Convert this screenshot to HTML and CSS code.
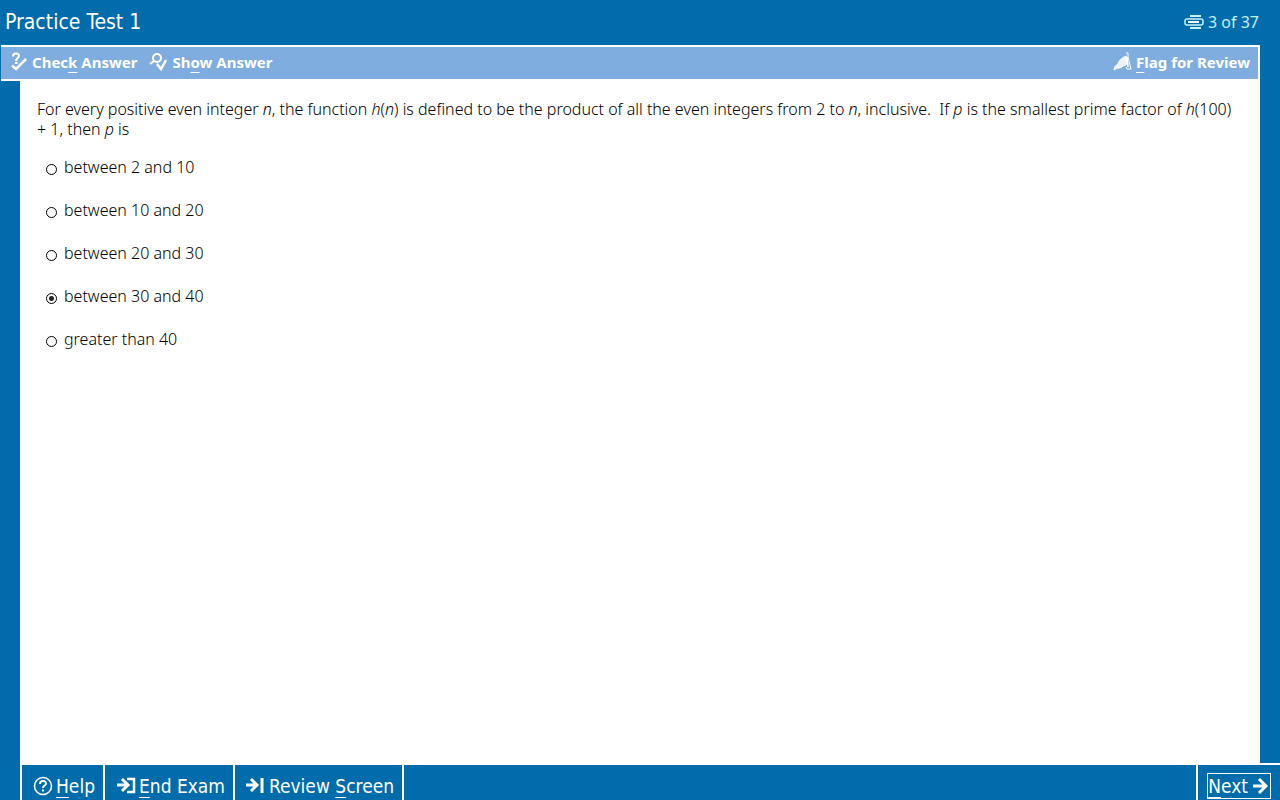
FILE: index.html
```html
<!DOCTYPE html>
<html lang="en">
<head>
    <meta charset="utf-8">
    <title>Practice Test 1</title>
    <link rel="stylesheet" href="styles.css">
</head>
<body>
    <div class="exam">
        <header class="exam-header">
            <h1 class="exam-title">Practice Test 1</h1>
            <div class="exam-progress">
                <svg width="20" height="16" viewBox="0 0 20 16" fill="none" stroke="#c4f0fa">
                    <path d="M6 2h11M6 14h11" stroke-width="2"/>
                    <rect x="1" y="5" width="18" height="6" rx="2" stroke-width="1.500"/>
                    <path d="M4 8h11" stroke="#fff" stroke-width="2"/>
                </svg>
                <span>3 of 37</span>
            </div>
        </header>

        <div class="toolbar">
            <button type="button" class="tool-button">
                <svg width="16" height="20" viewBox="0 0 16 20" fill="none" stroke="#fff" stroke-width="2">
                    <path d="M2 4.500C2 .5 8 .5 8 4c0 2-3 2-3 5"/>
                    <path d="M4 11h2.500"/>
                    <path d="M1 13.500l4 3.500L15 7" stroke-width="2.500"/>
                </svg>
                <span>Chec<u>k</u> Answer</span>
            </button>
            <button type="button" class="tool-button">
                <svg width="18" height="20" viewBox="0 0 18 20" fill="none" stroke="#fff" stroke-width="2">
                    <circle cx="8" cy="6" r="4"/>
                    <path d="M5 9l-4 3"/>
                    <path d="M8 12l4 5 5-9" stroke-width="2.500"/>
                </svg>
                <span>Sh<u>o</u>w Answer</span>
            </button>
            <button type="button" class="tool-button tool-flag">
                <svg width="20" height="20" viewBox="0 0 20 20" fill="none" stroke="#fff">
                    <path d="M1 18c0-3 2-5 4-6 1-4 4-6 8-8l1 5-1 4c-3 0-4 3-7 3-2 0-3 1-5 2z" fill="#fff" fill-opacity=".85"/>
                    <path d="M13 1h2v4l3 12h-4l-1-2"/>
                    <path d="M14 5l1 10" stroke-width="1.500"/>
                </svg>
                <span><u>F</u>lag for Review</span>
            </button>
        </div>

        <main class="question">
            <p class="question-text">For every positive even integer <i>n</i>, the function <i>h</i>(<i>n</i>) is defined to be the product of all the even integers from 2 to <i>n</i>, inclusive.&nbsp; If <i>p</i> is the smallest prime factor of <i>h</i>(100) + 1, then <i>p</i> is</p>
            <div class="choices">
                <label class="choice"><input type="radio" name="answer"> between 2 and 10</label>
                <label class="choice"><input type="radio" name="answer"> between 10 and 20</label>
                <label class="choice"><input type="radio" name="answer"> between 20 and 30</label>
                <label class="choice"><input type="radio" name="answer" checked> between 30 and 40</label>
                <label class="choice"><input type="radio" name="answer"> greater than 40</label>
            </div>
        </main>

        <footer class="exam-footer">
            <button type="button" class="nav-button">
                <svg width="20" height="20" viewBox="0 0 20 20" fill="none" stroke="#fff">
                    <circle cx="10" cy="10" r="8.500" stroke-width="1.500"/>
                    <path d="M7 8c0-4 6-4 6-.5 0 2-3 2-3 4.500" stroke-width="2"/>
                    <path d="M10 13.500v2" stroke-width="2"/>
                </svg>
                <span><u>H</u>elp</span>
            </button>
            <button type="button" class="nav-button">
                <svg width="20" height="20" viewBox="0 0 20 20" fill="none" stroke="#fff">
                    <path d="M1 9h10M6 3l6 6-6 6" stroke-width="3"/>
                    <path d="M11 3h7v13h-7" stroke-width="2.500"/>
                </svg>
                <span><u>E</u>nd Exam</span>
            </button>
            <button type="button" class="nav-button">
                <svg width="20" height="20" viewBox="0 0 20 20" fill="none" stroke="#fff" stroke-width="3">
                    <path d="M0 9h10M5 3l6 6-6 6"/>
                    <path d="M16 2v15"/>
                </svg>
                <span>Review <u>S</u>creen</span>
            </button>
            <div class="nav-next">
                <button type="button" class="next-button">
                    <span><u>N</u>ext</span>
                    <svg width="16" height="18" viewBox="0 0 16 18" fill="none" stroke="#fff" stroke-width="3">
                        <path d="M1 9h12M7 2l7 7-7 7"/>
                    </svg>
                </button>
            </div>
        </footer>
    </div>
</body>
</html>
```
FILE: styles.css
```css
* {
    box-sizing: border-box;
}

body {
    margin: 0;
    background: #006cab;
    font-family: "Noto Sans", sans-serif;
}

button {
    margin: 0;
    border: 0;
    background: none;
    color: #fff;
    font-family: inherit;
    cursor: pointer;
}

u {
    text-decoration: underline;
    text-decoration-thickness: 1px;
    text-underline-offset: 4px;
}

.exam {
    display: flex;
    flex-direction: column;
    min-height: 100vh;
}

.exam-header {
    display: flex;
    align-items: center;
    justify-content: space-between;
    height: 45px;
    padding: 0 21px 2px 5px;
    color: #fff;
}

.exam-title {
    margin: 0;
    font-family: "DejaVu Sans Condensed", sans-serif;
    font-size: 21px;
    font-weight: normal;
}

.exam-progress {
    display: flex;
    align-items: center;
    gap: 4px;
    font-size: 16px;
    color: #c4f0fa;
}

/* toolbar */
.toolbar {
    display: flex;
    align-items: center;
    gap: 12px;
    height: 36px;
    margin: 0 20px 0 1px;
    padding: 0 8px 2px 10px;
    background: #80addf;
    border: solid #fff;
    border-width: 2px 2px 2px 0;
}

.tool-button {
    display: flex;
    align-items: center;
    gap: 5px;
    padding: 0;
    font-size: 15px;
    font-weight: bold;
}

.tool-flag {
    margin-left: auto;
    gap: 3px;
}

/* question area */
.question {
    flex: 1;
    margin: 0 20px;
    padding: 18px 17px;
    background: #fff;
    color: #000;
    font-size: 16px;
    font-weight: 300;
    line-height: 20px;
}

.question-text {
    margin: 0 0 18px;
}

.choices {
    display: flex;
    flex-direction: column;
    align-items: flex-start;
    gap: 23px;
    padding-left: 9px;
}

.choice {
    display: flex;
    align-items: center;
    gap: 7px;
}

.choice input {
    appearance: none;
    width: 11px;
    height: 11px;
    margin: 4px 0 0;
    border: 1px solid #000;
    border-radius: 50%;
    background: #fff;
}

.choice input:checked {
    background: radial-gradient(circle, #222 0 2px, #fff 3px);
}

/* bottom navigation */
.exam-footer {
    display: flex;
    height: 35px;
    margin-left: 20px;
    border-left: 2px solid #fff;
    font-family: "DejaVu Sans Condensed", sans-serif;
}

.nav-button {
    display: flex;
    align-items: center;
    gap: 3px;
    padding: 7px 8px 0 11px;
    border-right: 2px solid #fff;
    font-size: 19px;
}

.nav-next {
    margin: -2px 0 0 auto;
    padding: 8px 9px 0 9px;
    border-top: 2px solid #fff;
    border-left: 2px solid #fff;
}

.next-button {
    display: flex;
    align-items: center;
    gap: 4px;
    height: 26px;
    padding: 0 2px 0 0;
    border: 1px solid #fff;
    font-size: 19px;
}
```
